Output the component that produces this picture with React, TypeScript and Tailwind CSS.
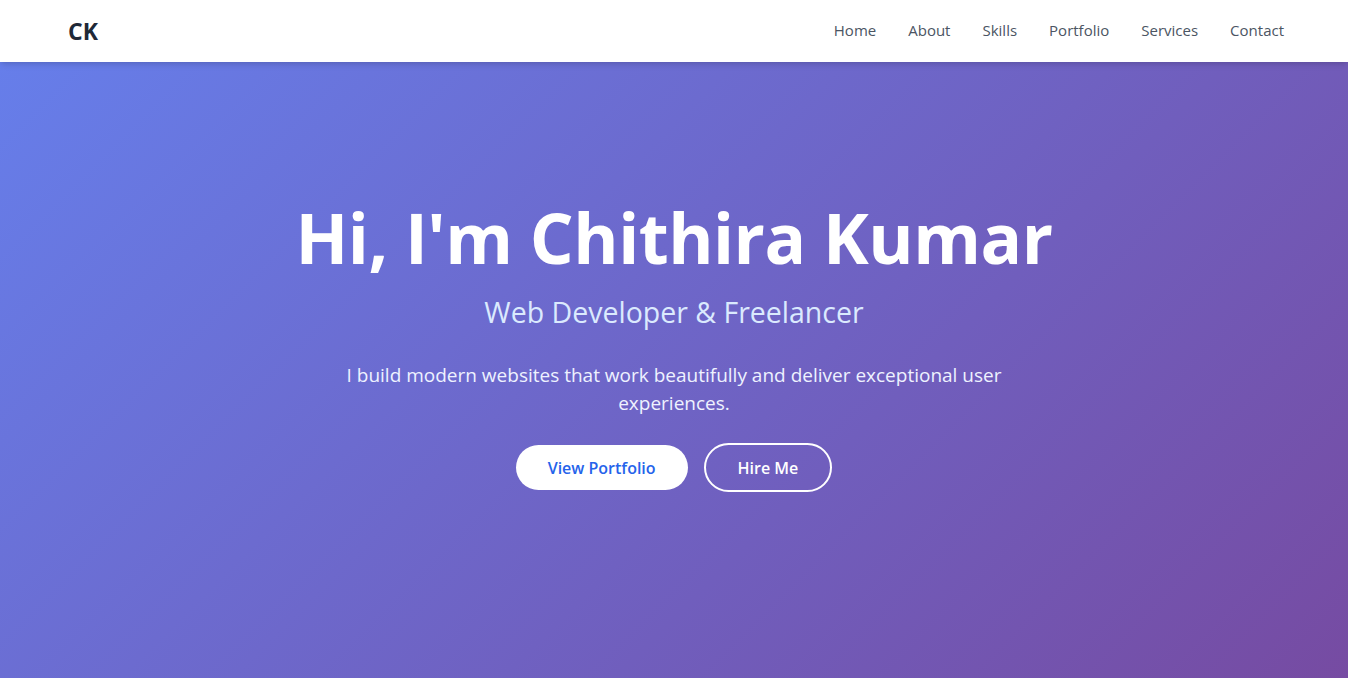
export default function App() {
  const font = { fontFamily: '"Open Sans", "Noto Sans", sans-serif' };
  return (
    <div className="min-h-screen" style={font}>
      <header className="relative z-10 h-[62px] bg-white shadow-md">
        <div className="flex h-full items-center justify-between pl-[68px] pr-[64px]">
          <div className="text-[23px] font-bold text-[#1f2937]">CK</div>
          <nav className="flex items-center gap-8 pb-[2px] text-[15px] text-[#4b5563]">
            <a>Home</a>
            <a>About</a>
            <a>Skills</a>
            <a>Portfolio</a>
            <a>Services</a>
            <a>Contact</a>
          </nav>
        </div>
      </header>
      <section className="flex h-[616px] flex-col items-center bg-[linear-gradient(135deg,#667eea_0%,#764ba2_100%)] pt-[133px] text-center text-white">
        <h1 className="text-[69px] font-bold leading-[84px] tracking-[-0.5px]">Hi, I'm Chithira Kumar</h1>
        <p className="mt-[15px] text-[28.5px] leading-[36px] text-[#dbeafe]">Web Developer &amp; Freelancer</p>
        <p className="mt-[31px] max-w-[672px] text-[19px] leading-[28px] text-[#eef2ff]">
          I build modern websites that work beautifully and deliver exceptional user experiences.
        </p>
        <div className="mt-[26px] flex items-center gap-4">
          <button className="h-[45px] rounded-full bg-white px-8 text-[16px] font-semibold text-[#2563eb]">View Portfolio</button>
          <button className="h-[49px] rounded-full border-2 border-white px-8 text-[16px] font-semibold text-white">Hire Me</button>
        </div>
      </section>
    </div>
  );
}
